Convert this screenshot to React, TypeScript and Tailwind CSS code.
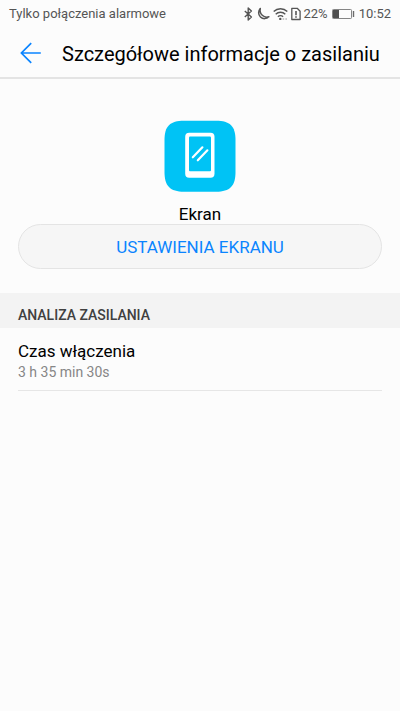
function BluetoothIcon() {
  return (
    <svg className="h-[14px] w-[10px]" viewBox="0 0 10 14" fill="none" stroke="currentColor" strokeWidth={1.4}>
      <path d="M1.8 4l6.6 6L5.2 13V1l3.2 3-6.6 6" strokeLinejoin="round" />
    </svg>
  );
}

function MoonIcon() {
  return (
    <svg className="h-[14px] w-[14px]" viewBox="0 0 14 14" fill="none" stroke="currentColor" strokeWidth={1.5}>
      <path d="M4.3 1.5A5.8 5.8 0 1 0 12.9 9.8C8 11.4 3 7 4.3 1.5z" strokeLinejoin="round" />
    </svg>
  );
}

function WifiIcon() {
  return (
    <svg className="h-[14px] w-[15px]" viewBox="0 0 15 14" fill="none" stroke="currentColor" strokeWidth={1.4}>
      <path d="M0.7 4.6a9.6 9.6 0 0 1 13.6 0M2.7 7.3a6.8 6.8 0 0 1 9.6 0M4.9 9.8a3.7 3.7 0 0 1 5.2 0" />
      <circle cx="7.3" cy="11.9" r="1.2" fill="currentColor" stroke="none" />
      <path d="M9.6 12h1.6M12.4 12h1.6" opacity={0.4} />
    </svg>
  );
}

function SimAlertIcon() {
  return (
    <svg className="h-[14px] w-[10px]" viewBox="0 0 10 14" fill="none" stroke="currentColor" strokeWidth={1.3}>
      <path d="M0.8 1.3h5.4l2.9 2.9v8.3H0.8z" strokeLinejoin="round" />
      <path d="M5 4v4.2M5 9.3v1.5" strokeWidth={1.6} />
    </svg>
  );
}

function BatteryIcon() {
  return (
    <svg className="h-[14px] w-[23px]" viewBox="0 0 23 14" fill="none">
      <rect x="0.5" y="2.5" width="19" height="9" rx="0.8" stroke="#858585" />
      <rect x="1" y="3" width="6" height="8" fill="#505050" />
      <path d="M21.5 4v6" stroke="#6b6b6b" strokeWidth={1.4} />
    </svg>
  );
}

function ScreenIcon() {
  return (
    <svg className="h-[72px] w-[72px]" viewBox="0 0 72 72" fill="none" aria-hidden="true">
      <path
        d="M20 0.7h32C66 0.7 71.5 6 71.5 20v32C71.5 66 66 71.7 52 71.7H20C6 71.7 0.5 66 0.5 52V20C0.5 6 6 0.7 20 0.7z"
        fill="#00c3f5"
      />
      <rect x="21.2" y="12.8" width="29.3" height="45" rx="4" fill="#fff" />
      <rect x="25" y="16.6" width="22" height="34.6" rx="1" fill="#00c3f5" />
      <path d="M28.8 37.3l9.6-10M33.8 40.3l9.6-10" stroke="#fff" strokeWidth={2.2} strokeLinecap="round" />
    </svg>
  );
}

function StatusBar() {
  return (
    <div className="flex h-7 items-center justify-between px-[9px] text-[13px] text-[#555555]">
      <span>Tylko połączenia alarmowe</span>
      <div className="flex items-center gap-0.5">
        <div className="flex items-center gap-[3px]">
          <BluetoothIcon />
          <MoonIcon />
          <WifiIcon />
          <SimAlertIcon />
        </div>
        <div className="flex items-center gap-1">
          <span>22%</span>
          <BatteryIcon />
          <span>10:52</span>
        </div>
      </div>
    </div>
  );
}

const usage = [{ label: "Czas włączenia", value: "3 h 35 min 30s" }];

export default function App() {
  return (
    <div className="min-h-screen bg-[#fcfcfc] font-[Roboto,sans-serif] text-black">
      <StatusBar />

      <header className="flex h-[51px] items-center border-b-2 border-[#e4e4e4] pl-5">
        <button type="button" aria-label="Wstecz" className="mr-5 shrink-0 text-[#0a84ff]">
          <svg className="h-[22px] w-[22px]" viewBox="0 0 22 22" fill="none" stroke="currentColor" strokeWidth={1.7}>
            <path d="M11.2 1.2L1.4 11l9.8 9.8M1.4 11h19.4" />
          </svg>
        </button>
        <h1 className="truncate pt-0.5 text-xl">Szczegółowe informacje o zasilaniu</h1>
      </header>

      <main>
        <section className="flex flex-col items-center px-[18px] pt-[41px] pb-6">
          <ScreenIcon />
          <h2 className="mt-3 text-[17px] leading-5">Ekran</h2>
          <button
            type="button"
            className="h-[45px] w-full rounded-full border border-[#e4e4e4] bg-[#f6f6f6] pt-0.5 text-[17px] text-[#0a84ff]"
          >
            USTAWIENIA EKRANU
          </button>
        </section>

        {/* Power analysis */}
        <section>
          <h3 className="bg-[#f3f3f3] px-[18px] pt-3 pb-[3px] text-sm font-medium text-[#404040]">ANALIZA ZASILANIA</h3>
          <dl className="px-[18px]">
            {usage.map((item) => (
              <div key={item.label} className="border-b border-[#e6e6e6] pt-[13px] pb-2">
                <dt className="text-[17px] leading-[21px]">{item.label}</dt>
                <dd className="text-sm text-[#868686]">{item.value}</dd>
              </div>
            ))}
          </dl>
        </section>
      </main>
    </div>
  );
}
